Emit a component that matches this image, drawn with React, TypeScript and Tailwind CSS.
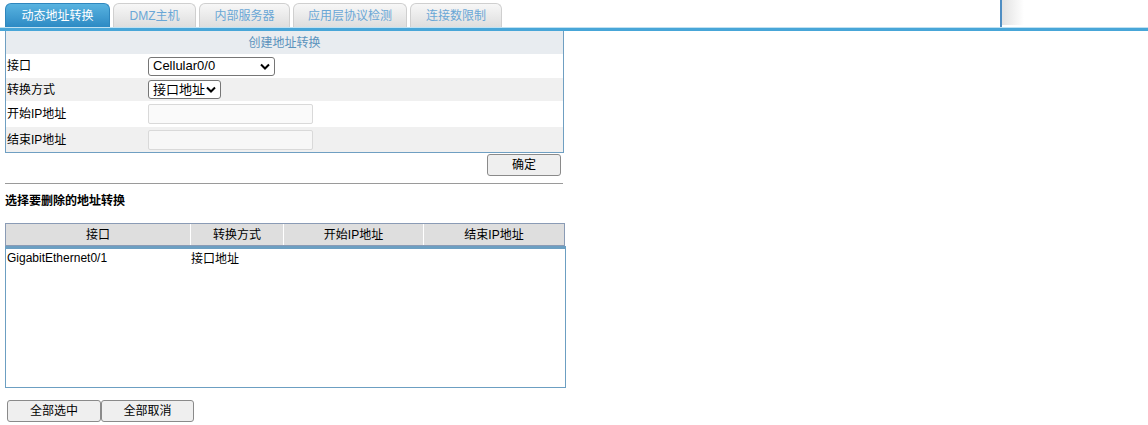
import { FC, ReactNode } from 'react'

const FONT = 'font-["Liberation_Sans","Noto_Sans_CJK_SC",sans-serif]'

const tabs = ['动态地址转换', 'DMZ主机', '内部服务器', '应用层协议检测', '连接数限制']
const tabWidths = ['w-[105px]', 'w-[83px]', 'w-[91px]', 'w-[114px]', 'w-[92px]']

const Tab: FC<{ label: string; active?: boolean; width: string }> = ({ label, active, width }) => (
  <div
    className={
      active
        ? `${width} h-[24px] rounded-t-[6px] border border-b-0 border-[#2e86bd] bg-gradient-to-b from-[#58b3e0] to-[#2c8ac4] text-white flex items-center justify-center text-[12px]`
        : `${width} h-[24px] rounded-t-[6px] border border-b-0 border-[#cfcfcf] bg-gradient-to-b from-[#f7f7f7] to-[#dedede] text-[#6aa7d6] flex items-center justify-center text-[12px]`
    }
  >
    {label}
  </div>
)

const FormRow: FC<{ label: string; shaded?: boolean; h: string; children: ReactNode }> = ({
  label,
  shaded,
  h,
  children,
}) => (
  <div className={`flex items-center ${h} ${shaded ? 'bg-[#f0f0f0]' : 'bg-white'}`}>
    <div className="w-[142px] pl-px text-[12px] text-black">{label}</div>
    <div className="flex items-center">{children}</div>
  </div>
)

const Chevron = () => (
  <svg width="10" height="7" viewBox="0 0 10 7" className="shrink-0">
    <path d="M1 1.5 L5 5.5 L9 1.5" fill="none" stroke="#000" strokeWidth="2" />
  </svg>
)

const FakeSelect: FC<{ value: string; w: string }> = ({ value, w }) => (
  <div
    className={`${w} h-[19px] border border-[#767676] rounded-[3px] bg-white flex items-center justify-between pl-[4px] pr-[4px] text-[13px] text-black`}
  >
    <span>{value}</span>
    <Chevron />
  </div>
)

const Btn: FC<{ label: string; w: string }> = ({ label, w }) => (
  <div
    className={`${w} h-[22px] border border-[#8a8a8a] rounded-[3px] bg-[#efefef] flex items-center justify-center text-[12px] text-black`}
  >
    {label}
  </div>
)

export default function App() {
  return (
    <div className={`${FONT} w-[1148px] h-[425px] bg-white overflow-hidden`}>
      {/* tabs bar */}
      <div className="flex items-end h-[27px]">
        <div className="flex items-end gap-[3px] pl-[5px]">
          {tabs.map((t, i) => (
            <Tab key={t} label={t} active={i === 0} width={tabWidths[i]} />
          ))}
        </div>
        <div className="ml-[498px] h-[27px] w-[2px] bg-[#4f8ec3]" />
        <div className="h-[25px] w-[22px] bg-gradient-to-r from-[#e2e2e2] to-white self-start" />
      </div>
      <div className="h-px bg-[#bfe1f2]" />
      <div className="h-[3px] bg-[#48a6d8]" />

      <div className="pl-[5px]">
        {/* create panel */}
        <div className="w-[559px] border border-t-0 border-[#6f9fc2]">
          <div className="h-[23px] bg-[#e8ecf0] flex items-center justify-center text-[12px] text-[#5b93bd]">
            创建地址转换
          </div>
          <FormRow label="接口" h="h-[24px]">
            <FakeSelect value="Cellular0/0" w="w-[127px]" />
          </FormRow>
          <FormRow label="转换方式" shaded h="h-[23px]">
            <FakeSelect value="接口地址" w="w-[73px]" />
          </FormRow>
          <FormRow label="开始IP地址" h="h-[26px]">
            <div className="w-[165px] h-[20px] border border-[#d9d9d9] rounded-[2px] bg-[#fafafa]" />
          </FormRow>
          <FormRow label="结束IP地址" shaded h="h-[25px]">
            <div className="w-[165px] h-[20px] border border-[#d9d9d9] rounded-[2px] bg-[#f7f7f7]" />
          </FormRow>
        </div>
        <div className="w-[559px] flex justify-end pr-[3px] pt-[1px]">
          <Btn label="确定" w="w-[74px]" />
        </div>
        <div className="w-[558px] mt-[7px] border-t border-[#9a9a9a]" />

        <div className="mt-[9px] text-[12px] font-bold text-black h-[16px] leading-[16px]">
          选择要删除的地址转换
        </div>

        {/* list table */}
        <div className="mt-[14px] w-[560px] h-[23px] border border-[#8a9bb5] bg-[#dedede] flex text-[12px] text-black">
          <div className="w-[185px] flex items-center justify-center border-r border-white">接口</div>
          <div className="w-[93px] flex items-center justify-center border-r border-white">转换方式</div>
          <div className="w-[140px] flex items-center justify-center border-r border-white">开始IP地址</div>
          <div className="flex-1 flex items-center justify-center">结束IP地址</div>
        </div>
        <div className="w-[561px] h-[142px] border border-t-[3px] border-[#6c9fc2] bg-white text-[12px] text-black">
          <div className="flex">
            <div className="w-[185px] pl-px">GigabitEthernet0/1</div>
            <div className="pt-[1px]">接口地址</div>
          </div>
        </div>

        <div className="flex mt-[12px] ml-[2px]">
          <Btn label="全部选中" w="w-[94px]" />
          <Btn label="全部取消" w="w-[93px]" />
        </div>
      </div>
    </div>
  )
}
